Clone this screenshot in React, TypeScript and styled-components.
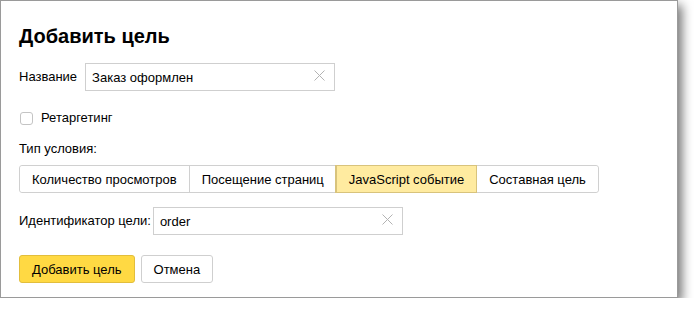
import React, { useState } from 'react';
import styled, { createGlobalStyle } from 'styled-components';

const Global = createGlobalStyle`
    html, body {
        margin: 0;
        padding: 0;
        background: #fff;
    }
    body {
        font-family: "Liberation Sans", Arial, Helvetica, sans-serif;
        font-size: 13px;
        color: #000;
    }
`;

const Dialog = styled.div`
    box-sizing: border-box;
    width: 678px;
    height: 298px;
    background: #fff;
    border: 1px solid #9a9a9a;
    box-shadow: 4px 5px 10px rgba(0, 0, 0, 0.55);
    padding: 22px 18px 0 18px;
`;

const Title = styled.h2`
    margin: 0 0 14px 0;
    font-size: 20px;
    font-weight: bold;
    line-height: 26px;
`;

const Row = styled.div<{ gap?: number; mb?: number }>`
    display: flex;
    align-items: center;
    gap: ${p => p.gap ?? 6}px;
    margin-bottom: ${p => p.mb ?? 0}px;
`;

const Label = styled.span`
    line-height: 16px;
    color: #000;
`;

const InputBox = styled.div<{ w: number }>`
    box-sizing: border-box;
    width: ${p => p.w}px;
    height: 28px;
    border: 1px solid #cfcfcf;
    display: flex;
    align-items: center;
    padding: 0 6px 0 6px;
`;

const Field = styled.input`
    flex: 1;
    border: none;
    outline: none;
    font: inherit;
    padding: 0;
    background: transparent;
    color: #000;
`;

const Clear = styled.button`
    border: none;
    background: none;
    padding: 0;
    width: 14px;
    height: 14px;
    display: flex;
    cursor: pointer;
`;

const Box = styled.span`
    box-sizing: border-box;
    width: 13px;
    height: 13px;
    border: 1px solid #c4c4c4;
    border-radius: 3px;
    background: #fff;
`;

const CheckLabel = styled.label`
    display: flex;
    align-items: center;
    gap: 8px;
    margin: 0 0 15px 1px;
    line-height: 16px;
`;

const Tabs = styled.div`
    display: inline-flex;
    border: 1px solid #d0d0d0;
    border-radius: 3px;
    height: 28px;
    box-sizing: border-box;
    margin: 8px 0 14px 0;
`;

const Tab = styled.button<{ active?: boolean }>`
    box-sizing: border-box;
    height: 26px;
    font: inherit;
    color: #000;
    padding: 0 12px;
    margin: 0;
    border: none;
    border-left: 1px solid ${p => (p.active ? '#d8c37c' : '#d0d0d0')};
    background: ${p => (p.active ? '#ffeba0' : '#fff')};
    box-shadow: ${p => (p.active ? '0 0 0 1px #d8c37c' : 'none')};
    position: relative;
    z-index: ${p => (p.active ? 1 : 0)};
    &:first-child {
        border-left: none;
        border-radius: 3px 0 0 3px;
    }
    &:last-child {
        border-radius: 0 3px 3px 0;
    }
`;

const Actions = styled.div`
    display: flex;
    gap: 6px;
    margin-top: 20px;
`;

const Btn = styled.button<{ primary?: boolean }>`
    box-sizing: border-box;
    height: 28px;
    font: inherit;
    color: #000;
    padding: 0 12px;
    border-radius: 3px;
    border: 1px solid ${p => (p.primary ? '#e2be3c' : '#cfcfcf')};
    background: ${p => (p.primary ? '#ffd943' : '#fff')};
    cursor: pointer;
`;

const ClearIcon = () => (
    <svg width="11" height="11" viewBox="0 0 11 11">
        <path d="M0.5 0.5 L10.5 10.5 M10.5 0.5 L0.5 10.5" stroke="#b3b3b3" strokeWidth="1" />
    </svg>
);

const tabs = ['Количество просмотров', 'Посещение страниц', 'JavaScript событие', 'Составная цель'];

export default function App() {
    const [name, setName] = useState('Заказ оформлен');
    const [ident, setIdent] = useState('order');
    const [active, setActive] = useState(2);

    return (
        <>
            <Global />
            <Dialog>
                <Title>Добавить цель</Title>
                <Row gap={8} mb={19}>
                    <Label>Название</Label>
                    <InputBox w={250}>
                        <Field value={name} onChange={e => setName(e.target.value)} />
                        <Clear onClick={() => setName('')}><ClearIcon /></Clear>
                    </InputBox>
                </Row>
                <CheckLabel>
                    <Box />
                    Ретаргетинг
                </CheckLabel>
                <Label>Тип условия:</Label>
                <div>
                    <Tabs>
                        {tabs.map((t, i) => (
                            <Tab key={t} active={i === active} onClick={() => setActive(i)}>{t}</Tab>
                        ))}
                    </Tabs>
                </div>
                <Row gap={2}>
                    <Label>Идентификатор цели:</Label>
                    <InputBox w={250}>
                        <Field value={ident} onChange={e => setIdent(e.target.value)} />
                        <Clear onClick={() => setIdent('')}><ClearIcon /></Clear>
                    </InputBox>
                </Row>
                <Actions>
                    <Btn primary>Добавить цель</Btn>
                    <Btn>Отмена</Btn>
                </Actions>
            </Dialog>
        </>
    );
}
